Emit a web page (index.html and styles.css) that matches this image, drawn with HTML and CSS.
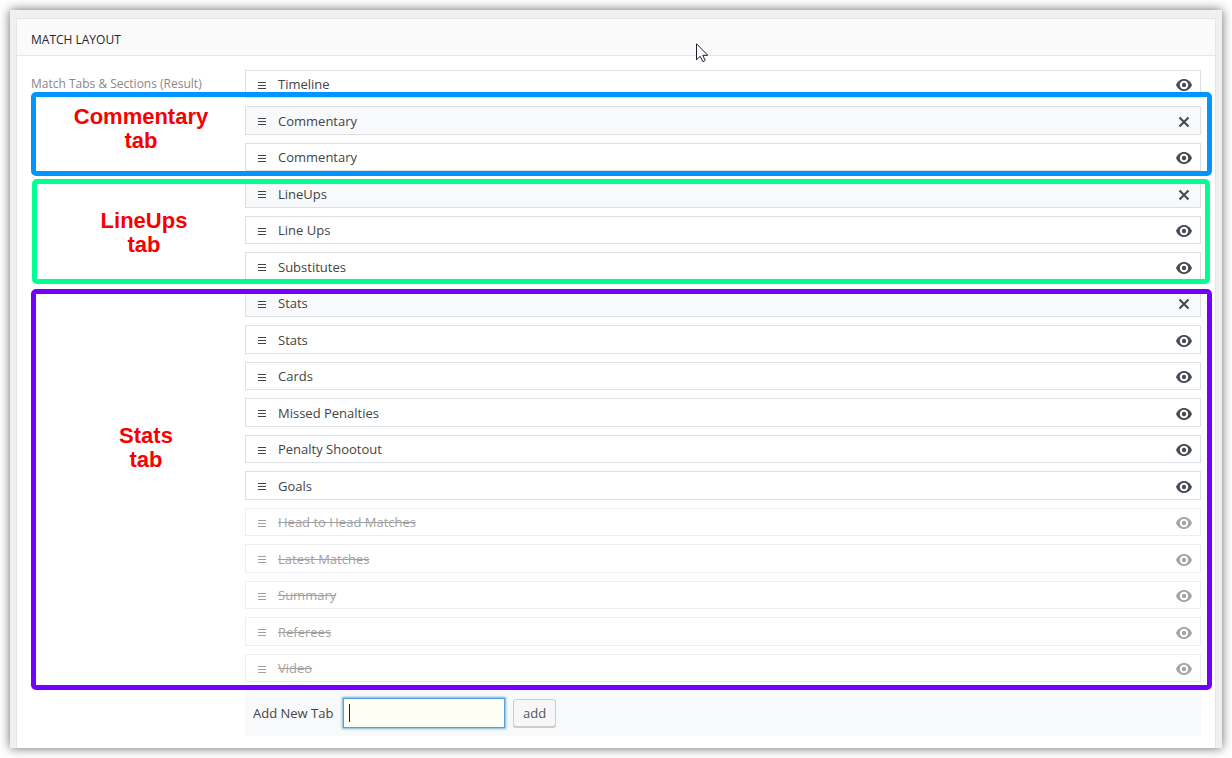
FILE: index.html
```
<!DOCTYPE html>
<html lang="en">
<head>
    <meta charset="UTF-8">
    <meta name="viewport" content="width=device-width, initial-scale=1.0">
    <title>Match Layout</title>
    <link rel="stylesheet" href="styles.css">
</head>
<body>
    <svg class="sprite" aria-hidden="true">
        <symbol id="icon-menu" viewBox="0 0 8 7">
            <path d="M0 0h8v1H0zM0 3h8v1H0zM0 6h8v1H0z" fill="currentColor"/>
        </symbol>
        <symbol id="icon-eye" viewBox="0 0 16 12">
            <path fill="currentColor" fill-rule="evenodd" d="M8 0C4.3 0 1.5 2.400 0 6c1.500 3.600 4.300 6 8 6s6.500-2.400 8-6c-1.500-3.600-4.300-6-8-6zM8 1.800a4.200 4.200 0 1 1 0 8.400a4.200 4.200 0 1 1 0-8.400z"/>
            <circle cx="8" cy="6" r="2.200" fill="currentColor"/>
        </symbol>
        <symbol id="icon-close" viewBox="0 0 12 12">
            <path d="M1.500 1.500l9 9M10.500 1.500l-9 9" fill="none" stroke="currentColor" stroke-width="2.200"/>
        </symbol>
    </svg>

    <div class="window">
        <div class="panel">
            <h2 class="panel-title">MATCH LAYOUT</h2>
            <div class="panel-body">
                <div class="field-label">Match Tabs &amp; Sections (Result)</div>
                <div class="field">
                    <ul class="sections">
                        <li class="section"><svg class="handle"><use href="#icon-menu"/></svg><span class="name">Timeline</span><button type="button" class="toggle" aria-label="Hide Timeline"><svg class="eye"><use href="#icon-eye"/></svg></button></li>
                        <li class="section tab"><svg class="handle"><use href="#icon-menu"/></svg><span class="name">Commentary</span><button type="button" class="toggle" aria-label="Remove Commentary tab"><svg class="close"><use href="#icon-close"/></svg></button></li>
                        <li class="section"><svg class="handle"><use href="#icon-menu"/></svg><span class="name">Commentary</span><button type="button" class="toggle" aria-label="Hide Commentary"><svg class="eye"><use href="#icon-eye"/></svg></button></li>
                        <li class="section tab"><svg class="handle"><use href="#icon-menu"/></svg><span class="name">LineUps</span><button type="button" class="toggle" aria-label="Remove LineUps tab"><svg class="close"><use href="#icon-close"/></svg></button></li>
                        <li class="section"><svg class="handle"><use href="#icon-menu"/></svg><span class="name">Line Ups</span><button type="button" class="toggle" aria-label="Hide Line Ups"><svg class="eye"><use href="#icon-eye"/></svg></button></li>
                        <li class="section"><svg class="handle"><use href="#icon-menu"/></svg><span class="name">Substitutes</span><button type="button" class="toggle" aria-label="Hide Substitutes"><svg class="eye"><use href="#icon-eye"/></svg></button></li>
                        <li class="section tab"><svg class="handle"><use href="#icon-menu"/></svg><span class="name">Stats</span><button type="button" class="toggle" aria-label="Remove Stats tab"><svg class="close"><use href="#icon-close"/></svg></button></li>
                        <li class="section"><svg class="handle"><use href="#icon-menu"/></svg><span class="name">Stats</span><button type="button" class="toggle" aria-label="Hide Stats"><svg class="eye"><use href="#icon-eye"/></svg></button></li>
                        <li class="section"><svg class="handle"><use href="#icon-menu"/></svg><span class="name">Cards</span><button type="button" class="toggle" aria-label="Hide Cards"><svg class="eye"><use href="#icon-eye"/></svg></button></li>
                        <li class="section"><svg class="handle"><use href="#icon-menu"/></svg><span class="name">Missed Penalties</span><button type="button" class="toggle" aria-label="Hide Missed Penalties"><svg class="eye"><use href="#icon-eye"/></svg></button></li>
                        <li class="section"><svg class="handle"><use href="#icon-menu"/></svg><span class="name">Penalty Shootout</span><button type="button" class="toggle" aria-label="Hide Penalty Shootout"><svg class="eye"><use href="#icon-eye"/></svg></button></li>
                        <li class="section"><svg class="handle"><use href="#icon-menu"/></svg><span class="name">Goals</span><button type="button" class="toggle" aria-label="Hide Goals"><svg class="eye"><use href="#icon-eye"/></svg></button></li>
                        <li class="section hidden"><svg class="handle"><use href="#icon-menu"/></svg><span class="name">Head to Head Matches</span><button type="button" class="toggle" aria-label="Show Head to Head Matches"><svg class="eye"><use href="#icon-eye"/></svg></button></li>
                        <li class="section hidden"><svg class="handle"><use href="#icon-menu"/></svg><span class="name">Latest Matches</span><button type="button" class="toggle" aria-label="Show Latest Matches"><svg class="eye"><use href="#icon-eye"/></svg></button></li>
                        <li class="section hidden"><svg class="handle"><use href="#icon-menu"/></svg><span class="name">Summary</span><button type="button" class="toggle" aria-label="Show Summary"><svg class="eye"><use href="#icon-eye"/></svg></button></li>
                        <li class="section hidden"><svg class="handle"><use href="#icon-menu"/></svg><span class="name">Referees</span><button type="button" class="toggle" aria-label="Show Referees"><svg class="eye"><use href="#icon-eye"/></svg></button></li>
                        <li class="section hidden"><svg class="handle"><use href="#icon-menu"/></svg><span class="name">Video</span><button type="button" class="toggle" aria-label="Show Video"><svg class="eye"><use href="#icon-eye"/></svg></button></li>
                    </ul>
                    <form class="add-tab">
                        <label for="newTab">Add New Tab</label>
                        <input type="text" id="newTab">
                        <button type="button" class="add-button">add</button>
                    </form>
                </div>
            </div>
        </div>

        <!-- Highlight boxes drawn over the list -->
        <div class="note note-commentary"><p>Commentary<br>tab</p></div>
        <div class="note note-lineups"><p>LineUps<br>tab</p></div>
        <div class="note note-stats"><p>Stats<br>tab</p></div>

        <svg class="cursor" viewBox="0 0 12 20" aria-hidden="true">
            <path d="M.5 .8v16l3.700-3.500 2.600 5.200q1.800.4 2.300-1.200L6.800 12.300h5z" fill="#fff" stroke="#1c1c2c"/>
        </svg>
    </div>
</body>
</html>
```
FILE: styles.css
```
* {
    margin: 0;
    padding: 0;
    box-sizing: border-box;
}

body {
    font-family: 'Open Sans', sans-serif;
    background-color: #fff;
    color: #444;
    padding: 10px;
    font-size: 13px;
    line-height: 18px;
}

.sprite {
    display: none;
}

.window {
    position: relative;
    padding: 8px 6px 0;
    background-color: #f0f0f0;
    box-shadow: 0 0 10px rgba(0, 0, 0, 0.6);
}

.panel {
    background-color: #fff;
    border: 1px solid #e5e5e5;
    border-bottom: none;
}

.panel-title {
    padding: 12px 14px 6px;
    background-color: #fafafa;
    border-bottom: 1px solid #e5e5e5;
    color: #23282d;
    font-size: 12px;
    font-weight: 400;
    line-height: 18px;
}

.panel-body {
    display: flex;
    padding: 14px 14px 12px;
}

.field-label {
    flex: 0 0 214px;
    padding-top: 5px;
    color: #888;
    font-size: 12px;
}

.field {
    flex: 1;
}

.sections {
    list-style: none;
}

.section {
    display: flex;
    align-items: center;
    height: 28px;
    margin-bottom: 8px;
    padding: 0 8px 0 12px;
    background-color: #fff;
    border: 1px solid #dcdfe4;
}

.section:nth-child(even) {
    height: 29px;
}

.section.tab {
    background-color: #f7f9fb;
}

.section.hidden {
    opacity: 0.5;
}

.section.hidden .name {
    text-decoration: line-through;
}

.handle {
    width: 8px;
    height: 7px;
    margin-top: 2px;
    margin-right: 12px;
}

.name {
    flex: 1;
}

.toggle {
    display: flex;
    align-items: center;
    justify-content: center;
    width: 16px;
    height: 16px;
    margin-top: 2px;
    background: none;
    border: none;
    color: #464d55;
}

.eye {
    width: 16px;
    height: 12px;
}

.close {
    width: 12px;
    height: 12px;
}

.add-tab {
    display: flex;
    align-items: center;
    gap: 8px;
    padding: 8px;
    background-color: #f7f9fb;
}

.add-tab label {
    min-width: 82px;
}

/* focused look, with the text caret */
.add-tab input {
    width: 162px;
    height: 30px;
    padding: 3px 5px;
    background: #fffff5 linear-gradient(#222, #222) no-repeat 5px center / 1px 18px;
    border: 1px solid #5b9dd9;
    box-shadow: 0 0 2px 1px rgba(30, 140, 190, 0.6);
    color: #32373c;
    font: inherit;
    outline: none;
}

.add-button {
    height: 28px;
    padding: 0 9px;
    background-color: #f7f7f7;
    border: 1px solid #ccc;
    border-radius: 3px;
    box-shadow: 0 1px 0 #ccc;
    color: #555;
    font: inherit;
}

.note {
    position: absolute;
    left: 21px;
    right: 10px;
    border: 5px solid;
    border-radius: 5px;
    color: #f90000;
    font-family: 'Liberation Sans', sans-serif;
    font-size: 22px;
    font-weight: 700;
    line-height: 24px;
    text-align: center;
    pointer-events: none;
}

.note p {
    width: 210px;
}

.note-commentary {
    top: 82px;
    height: 84px;
    padding-top: 8px;
    border-color: #0095ff;
}

.note-lineups {
    top: 169px;
    left: 22px;
    right: 12px;
    height: 105px;
    padding-top: 25px;
    border-color: #00ff91;
}

.note-lineups p {
    width: 214px;
}

.note-stats {
    top: 279px;
    height: 401px;
    padding-top: 130px;
    border-color: #7300ff;
}

.note-stats p {
    width: 220px;
}

.cursor {
    position: absolute;
    top: 33px;
    left: 686px;
    width: 12px;
    height: 20px;
}
```
